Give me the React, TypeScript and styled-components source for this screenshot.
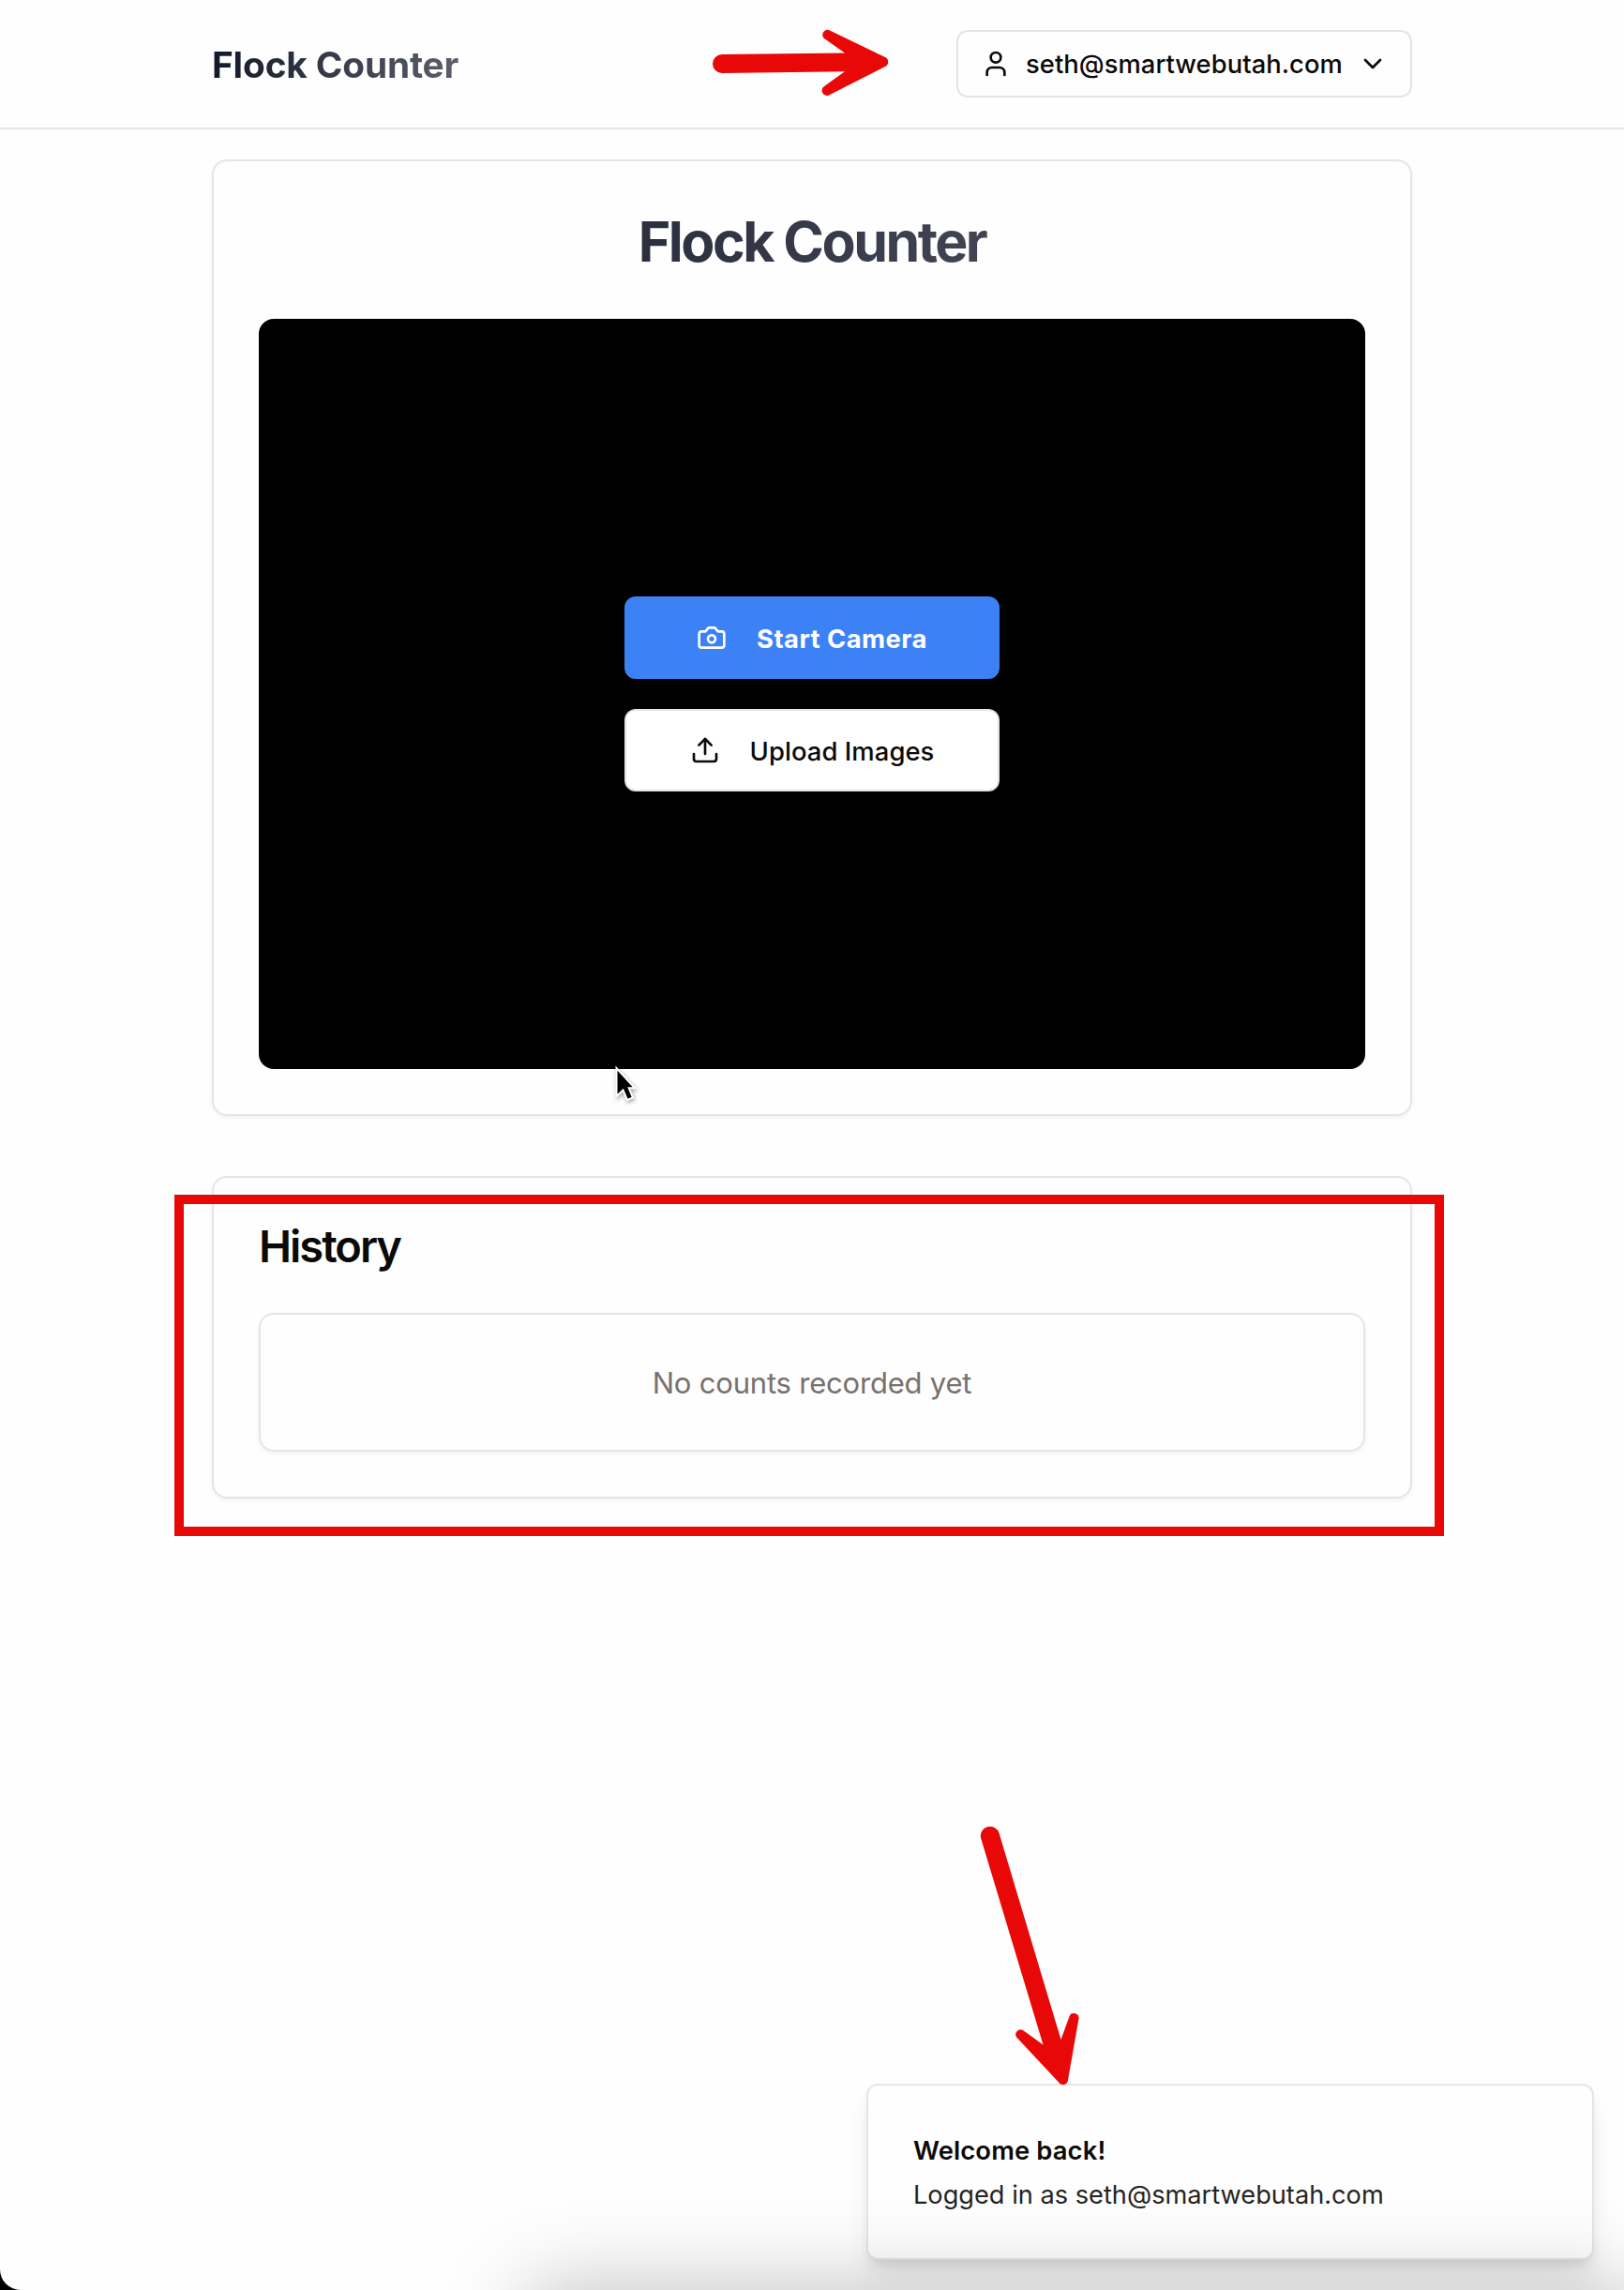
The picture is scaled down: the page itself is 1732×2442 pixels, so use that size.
import React from "react";
import styled, { createGlobalStyle } from "styled-components";

const Global = createGlobalStyle`
  *, *::before, *::after { box-sizing: border-box; }
  body { margin: 0; background: #000; font-family: Inter, "Liberation Sans", sans-serif; color: #0c0a09; -webkit-font-smoothing: antialiased; }
  h1, h2, p { margin: 0; }
`;

const Page = styled.div`
  position: relative;
  height: 2442px;
  overflow: hidden;
  background: #fefefe;
  border-bottom-left-radius: 22px;
`;

const Header = styled.header`
  height: 138px;
  border-bottom: 2px solid #e5e5e5;
`;

const Container = styled.div`
  width: 1280px;
  margin: 0 auto;
`;

const HeaderRow = styled(Container)`
  height: 136px;
  display: flex;
  align-items: center;
  justify-content: space-between;
`;

const Brand = styled.div`
  padding-top: 2px;
  font-size: 38.8px;
  line-height: 56px;
  font-weight: 700;
  letter-spacing: -0.15px;
  white-space: nowrap;
  background: linear-gradient(to right, #111827, #5b5f6b);
  -webkit-background-clip: text;
  background-clip: text;
  color: transparent;
`;

const AccountButton = styled.button`
  width: 486px;
  height: 72px;
  padding: 0 24px;
  display: flex;
  align-items: center;
  gap: 16px;
  border: 2px solid #e5e5e5;
  border-radius: 12px;
  background: transparent;
  font: 500 27.3px/40px Inter, "Liberation Sans", sans-serif;
  letter-spacing: 0.08px;
  color: #0c0a09;
  text-align: left;
  white-space: nowrap;
`;

const Email = styled.span`
  flex: 1;
  width: 0;
  padding-top: 1px;
`;

const Icon = styled.svg`
  width: 32px;
  height: 32px;
  flex: none;
  fill: none;
  stroke: currentColor;
  stroke-width: 2;
  stroke-linecap: round;
  stroke-linejoin: round;
`;

const Main = styled(Container)`
  padding-top: 32px;
  display: flex;
  flex-direction: column;
  gap: 64px;
`;

const Card = styled.section<{ $height: number }>`
  height: ${(p) => p.$height}px;
  padding: 48px;
  border: 2px solid #e5e5e5;
  border-radius: 16px;
  box-shadow: 0 2px 4px rgba(0, 0, 0, 0.05);
`;

const Title = styled.h1`
  height: 74px;
  padding-top: 2px;
  margin-bottom: 46px;
  font-size: 59px;
  line-height: 72px;
  font-weight: 700;
  letter-spacing: -2.5px;
  text-align: center;
  background: linear-gradient(to right, #111827, #5b5b6b);
  -webkit-background-clip: text;
  background-clip: text;
  color: transparent;
`;

const Viewfinder = styled.div`
  height: 800px;
  border-radius: 16px;
  background: #000;
  display: flex;
  flex-direction: column;
  align-items: center;
  justify-content: center;
  gap: 32px;
`;

const ActionButton = styled.button<{ $primary?: boolean }>`
  width: 400px;
  height: 88px;
  display: flex;
  align-items: center;
  justify-content: center;
  gap: 32px;
  border: 2px solid ${(p) => (p.$primary ? "#3c82f6" : "#e5e5e5")};
  border-radius: 12px;
  background: ${(p) => (p.$primary ? "#3c82f6" : "#fff")};
  color: ${(p) => (p.$primary ? "#fff" : "#0c0a09")};
  font: ${(p) => (p.$primary ? 700 : 500)} 27.4px/40px Inter, "Liberation Sans", sans-serif;
  letter-spacing: ${(p) => (p.$primary ? 0.45 : 0.08)}px;
  white-space: nowrap;
`;

const ActionLabel = styled.span`
  padding-top: 1px;
`;

const SectionTitle = styled.h2`
  height: 48px;
  padding-top: 1px;
  margin-bottom: 48px;
  font-size: 47px;
  line-height: 48px;
  font-weight: 600;
  letter-spacing: -2px;
`;

const EmptyState = styled.div`
  height: 148px;
  display: flex;
  align-items: center;
  justify-content: center;
  border: 2px solid #e5e5e5;
  border-radius: 16px;
  box-shadow: 0 2px 4px rgba(0, 0, 0, 0.05);
  color: #78716c;
  font-size: 31px;
  letter-spacing: -0.2px;
`;

const Toast = styled.div`
  position: absolute;
  right: 32px;
  bottom: 32px;
  width: 776px;
  height: 188px;
  padding: 2px 48px 0;
  display: flex;
  flex-direction: column;
  justify-content: center;
  gap: 8px;
  border: 2px solid #e5e5e5;
  border-radius: 12px;
  background: #fefefe;
  box-shadow: 0 20px 30px -6px rgba(0, 0, 0, 0.1), 0 8px 12px -4px rgba(0, 0, 0, 0.1);
`;

const ToastTitle = styled.p`
  font-size: 27.4px;
  line-height: 40px;
  font-weight: 600;
  letter-spacing: 0.12px;
`;

const ToastText = styled.p`
  font-size: 27.2px;
  line-height: 40px;
  color: #262423;
`;

const BottomGlow = styled.div`
  position: absolute;
  left: 562px;
  right: -24px;
  top: 100%;
  height: 200px;
  border-radius: 20px;
  box-shadow: 0 0 92px rgba(0, 0, 0, 0.26);
  pointer-events: none;
`;

const Highlight = styled.div`
  position: absolute;
  left: 186px;
  top: 1274px;
  width: 1354px;
  height: 364px;
  border: 10px solid #e80808;
`;

const Overlay = styled.svg`
  position: absolute;
  inset: 0;
  pointer-events: none;
`;

const Cursor = styled.path`
  fill: #000;
  stroke: #fff;
  stroke-width: 2;
  filter: drop-shadow(1px 2px 2px rgba(0, 0, 0, 0.35));
`;

export default function App() {
  return (
    <>
      <Global />
      <Page>
        <Header>
          <HeaderRow>
            <Brand>Flock Counter</Brand>
            <AccountButton>
              <Icon viewBox="0 0 24 24">
                <path d="M19 21v-2a4 4 0 0 0-4-4H9a4 4 0 0 0-4 4v2" />
                <circle cx="12" cy="7" r="4" />
              </Icon>
              <Email>seth@smartwebutah.com</Email>
              <Icon viewBox="0 0 24 24">
                <path d="m6 9 6 6 6-6" />
              </Icon>
            </AccountButton>
          </HeaderRow>
        </Header>

        <Main>
          <Card $height={1020}>
            <Title>Flock Counter</Title>
            <Viewfinder>
              <ActionButton $primary>
                <Icon viewBox="0 0 24 24">
                  <path d="M14.5 4h-5L7 7H4a2 2 0 0 0-2 2v9a2 2 0 0 0 2 2h16a2 2 0 0 0 2-2V9a2 2 0 0 0-2-2h-3l-2.5-3z" />
                  <circle cx="12" cy="13" r="3" />
                </Icon>
                <ActionLabel>Start Camera</ActionLabel>
              </ActionButton>
              <ActionButton>
                <Icon viewBox="0 0 24 24">
                  <path d="M21 15v4a2 2 0 0 1-2 2H5a2 2 0 0 1-2-2v-4" />
                  <path d="m17 8-5-5-5 5" />
                  <path d="M12 3v12" />
                </Icon>
                <ActionLabel>Upload Images</ActionLabel>
              </ActionButton>
            </Viewfinder>
          </Card>

          <Card $height={344}>
            <SectionTitle>History</SectionTitle>
            <EmptyState>No counts recorded yet</EmptyState>
          </Card>
        </Main>

        <Toast>
          <ToastTitle>Welcome back!</ToastTitle>
          <ToastText>Logged in as seth@smartwebutah.com</ToastText>
        </Toast>
        <BottomGlow />
        <Highlight />

        <Overlay width="1732" height="2442" viewBox="0 0 1732 2442">
          <g fill="#e80808">
            <path d="M770 58 L901 56.5 L879 41 A5.3 5.3 0 0 1 884 32 L944 61 A5.5 5.5 0 0 1 944 71 L885 101 A5.3 5.3 0 0 1 879 92 L901 76.3 L770 78 A10 10 0 0 1 770 58Z" />
            <path d="M1046.2 1960.5 A10 10 0 0 1 1065.6 1955 L1131.5 2175 L1140.6 2150 A5.2 5.2 0 0 1 1150.6 2152 L1139 2218 A5.3 5.3 0 0 1 1130 2221.5 L1084.2 2172.5 A5.2 5.2 0 0 1 1091 2165 L1112.5 2180.5Z" />
          </g>
          <Cursor d="M657.5 1139 V1169 L664.5 1162.5 L669 1173 L675 1170.5 L670.7 1160.3 H677Z" />
        </Overlay>
      </Page>
    </>
  );
}
